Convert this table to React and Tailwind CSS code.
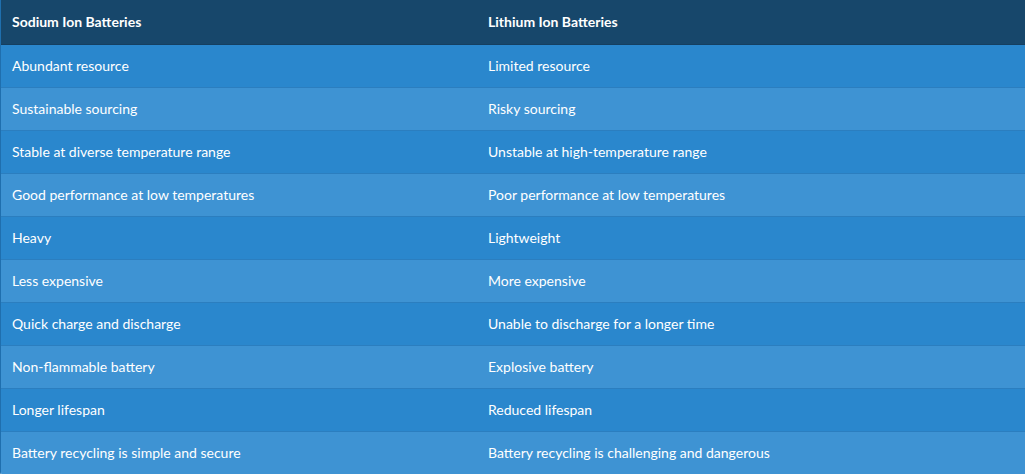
import React from "react";

const rows = [
  ["Abundant resource", "Limited resource"],
  ["Sustainable sourcing", "Risky sourcing"],
  ["Stable at diverse temperature range", "Unstable at high-temperature range"],
  ["Good performance at low temperatures", "Poor performance at low temperatures"],
  ["Heavy", "Lightweight"],
  ["Less expensive", "More expensive"],
  ["Quick charge and discharge", "Unable to discharge for a longer time"],
  ["Non-flammable battery", "Explosive battery"],
  ["Longer lifespan", "Reduced lifespan"],
  ["Battery recycling is simple and secure", "Battery recycling is challenging and dangerous"],
];

const App = () => {
  return (
    <div
      className="w-[1025px] h-[474px] overflow-hidden bg-white text-white text-[14px]"
      style={{ fontFamily: "Lato, 'Open Sans', sans-serif" }}
    >
      <div className="rounded-bl-[3px] overflow-hidden border-l border-[#1f6fae]">
        <div className="grid grid-cols-[475px_1fr] h-[45px] pb-[2px] items-center bg-[#17476b] border-b border-[#153f60] font-bold">
          <div className="pl-[11px]">Sodium Ion Batteries</div>
          <div className="pl-[12px]">Lithium Ion Batteries</div>
        </div>
        {rows.map((r, i) => (
          <div
            key={i}
            className={
              "grid grid-cols-[475px_1fr] h-[43px] pb-[2px] items-center border-b border-[#2b7ebf] " +
              (i % 2 === 0 ? "bg-[#2a87cd]" : "bg-[#3e93d3]")
            }
          >
            <div className="pl-[11px]">{r[0]}</div>
            <div className="pl-[12px]">{r[1]}</div>
          </div>
        ))}
      </div>
    </div>
  );
};

export default App;
